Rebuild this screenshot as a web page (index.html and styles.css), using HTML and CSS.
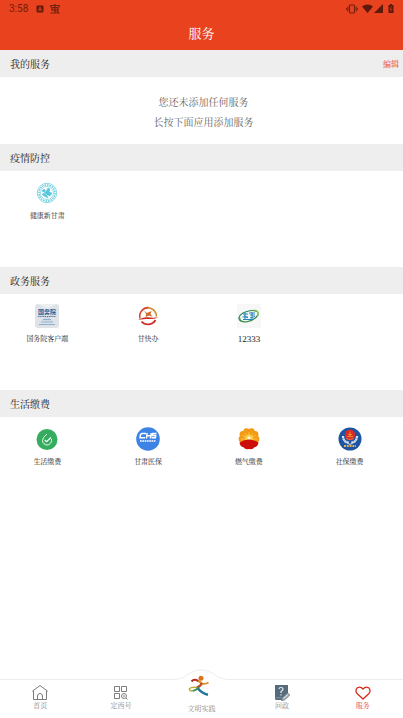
FILE: index.html
```html
<!DOCTYPE html>
<html lang="zh-CN">
<head>
    <meta charset="UTF-8">
    <meta name="viewport" content="width=device-width, initial-scale=1.0">
    <title>服务</title>
    <link rel="stylesheet" href="styles.css">
</head>
<body>
    <header class="header">
        <div class="status-bar">
            <span class="time">3:58</span>
            <svg class="status-app" width="8" height="8" viewBox="0 0 8 8">
                <rect x="0.5" y="0.5" width="7" height="7" rx="1" fill="#641b0d"/>
                <path d="M2.5 6 L4 2 L5.5 6 M3 4.8 H5" fill="none" stroke="#e8421e" stroke-width="0.8"/>
            </svg>
            <svg class="status-bug" width="10" height="10" viewBox="0 0 10 10" fill="none" stroke="#74200f" stroke-width="1.2">
                <path d="M5 0 V9 M0.8 3.2 V1.5 H9.2 V3.2 M2 3.7 H8 V6.2 H2 Z M0.5 9 H7.5 M7 7 L9.3 9.6"/>
            </svg>
            <div class="status-right">
                <svg width="12" height="10" viewBox="0 0 12 10" fill="none" stroke="#74200f">
                    <rect x="3.5" y="1" width="5" height="8" rx="1" stroke-width="1.2"/>
                    <path d="M1.8 2.5 V7.5 M0.4 4 V6 M10.2 2.5 V7.5 M11.6 4 V6"/>
                </svg>
                <svg class="wifi" width="11" height="9" viewBox="0 0 11 9">
                    <path d="M0 2.5 Q5.5 -1.7 11 2.5 L5.5 9 Z" fill="#5d190c"/>
                </svg>
                <svg class="signal" width="9" height="9" viewBox="0 0 9 9">
                    <path d="M0 9 L9 0 V9 Z" fill="#5d190c"/>
                </svg>
                <svg class="battery" width="6" height="9" viewBox="0 0 6 9">
                    <path d="M0.5 1 H2 V0 H4 V1 H5.5 V9 H0.5 Z" fill="#5d190c"/>
                    <path d="M3.5 2.5 L1.8 5.2 H3.8 L2.6 7.5" fill="none" stroke="#e8421e" stroke-width="0.6"/>
                </svg>
            </div>
        </div>
        <h1 class="title">服务</h1>
    </header>

    <main class="content">
        <section>
            <div class="section-bar">
                <h2>我的服务</h2>
                <button type="button" class="edit-button">编辑</button>
            </div>
            <div class="empty">
                <p>您还未添加任何服务</p>
                <p>长按下面应用添加服务</p>
            </div>
        </section>

        <section>
            <div class="section-bar"><h2>疫情防控</h2></div>
            <div class="grid">
                <a href="#" class="item">
                    <svg width="24" height="24" viewBox="0 0 24 24" fill="none" stroke="#55c5d8">
                        <circle cx="12" cy="12" r="9.7" stroke-width="0.7"/>
                        <circle cx="12" cy="12" r="8" stroke-width="1.4" stroke-dasharray="1.5 1"/>
                        <circle cx="12" cy="12" r="6.5" stroke-width="0.6"/>
                        <path d="M7 10 L9 8 L11 10 L13 7 L15 8 L14 11 L17 12 L15 15 L12 14 L13 17 L9 15 L7 13 L10 12 Z" fill="#55c5d8" stroke-width="0.5"/>
                        <path d="M8 11 L14 16 M12 8.5 L10 11" stroke="#fff" stroke-width="0.5"/>
                    </svg>
                    <span>健康新甘肃</span>
                </a>
            </div>
        </section>

        <section>
            <div class="section-bar"><h2>政务服务</h2></div>
            <div class="grid">
                <a href="#" class="item">
                    <svg width="24" height="24" viewBox="0 0 24 24">
                        <rect width="24" height="24" rx="3" fill="#dfe3e7"/>
                        <path d="M3 0 H21 L12 5 Z" fill="#eceef0"/>
                        <text x="12" y="10" class="icon-gov">国务院</text>
                        <path d="M3 12.5 H21" stroke="#51779a" stroke-width="1" stroke-dasharray="1.5 0.7"/>
                        <path d="M8 15.5 H16 M6 18 H18 M4 20.5 H20" stroke="#8fb0d2" stroke-width="1"/>
                        <path d="M9 14.5 L12 13.5 L15 14.5 M7 17 H17" stroke="#b2c9df" stroke-width="0.7" fill="none"/>
                    </svg>
                    <span>国务院客户端</span>
                </a>
                <a href="#" class="item">
                    <svg width="24" height="24" viewBox="0 0 24 24" fill="none">
                        <path d="M4 14.5 A8.6 8.6 0 0 1 13 3.7" stroke="#d8432a" stroke-width="1.6"/>
                        <path d="M12 3.7 A8.6 8.6 0 0 1 20.4 12.5" stroke="#d78a2a" stroke-width="1.6"/>
                        <path d="M5.5 17.5 A8.6 8.6 0 0 0 19.5 16" stroke="#cf3028" stroke-width="1.8"/>
                        <path d="M2 16 Q7 12.5 12 13.3 T22 13.3 Q19 15.5 14 15 T2 16 Z" fill="#cf2c26"/>
                        <path d="M8 6.5 L11 9 L15.5 7 L14.5 10 L16.5 12.7 L13 11.5 L9.5 12.9 L10.2 10 Z" fill="#ce6927"/>
                    </svg>
                    <span>甘快办</span>
                </a>
                <a href="#" class="item">
                    <svg width="24" height="24" viewBox="0 0 24 24">
                        <rect width="24" height="24" fill="#f7f7f7"/>
                        <g fill="none" transform="rotate(-15 12 12)">
                            <path d="M3 15 A9.6 5 0 0 1 20.5 9.5" stroke="#25865b" stroke-width="1"/>
                            <path d="M18 7.7 Q24 10 20 14.3" stroke="#78b947" stroke-width="1.5"/>
                            <path d="M2.5 11 Q1 16 9 17 Q16 17.3 20 14" stroke="#338d4a" stroke-width="1.3"/>
                        </g>
                        <path d="M6 10 H11 M8 8.5 V16 M5.5 13 H11 M12 9 H18 M13 11 H18 M15 8 V15 M6 15.5 H17 M7 11.5 L11 14 M13 14 L18 12.5" stroke="#2584bb" stroke-width="1"/>
                    </svg>
                    <span class="digits">12333</span>
                </a>
            </div>
        </section>

        <section>
            <div class="section-bar"><h2>生活缴费</h2></div>
            <div class="grid">
                <a href="#" class="item">
                    <svg width="24" height="24" viewBox="0 0 24 24" fill="none">
                        <circle cx="12" cy="12.5" r="10.5" fill="#36ad5e"/>
                        <path d="M12 7 Q7.5 10.5 7.5 13.5 A4.5 4.5 0 0 0 16.5 13.5 V12" stroke="#e7f6eb" stroke-width="1"/>
                        <path d="M9.7 13 L11.5 14.7 L16 10.5" stroke="#fff" stroke-width="1.1"/>
                    </svg>
                    <span>生活缴费</span>
                </a>
                <a href="#" class="item">
                    <svg width="24" height="24" viewBox="0 0 24 24">
                        <circle cx="12" cy="12" r="11.8" fill="#3d83e6"/>
                        <path d="M10 6.5 H5.7 L4.5 7.7 L4 10.8 H9 M11.2 6 L10.4 11.5 M15.2 6 L14.4 11.5 M10.8 8.8 H14.8 M20.5 6.5 H16.8 L16.4 8.6 H19.7 L19.3 10.8 H15.7" fill="none" stroke="#fff" stroke-width="1.5"/>
                        <path d="M4 14 H20" stroke="#d3e2fa" stroke-width="1.8" stroke-dasharray="1.7 0.6"/>
                    </svg>
                    <span>甘肃医保</span>
                </a>
                <a href="#" class="item">
                    <svg width="24" height="24" viewBox="0 0 24 24">
                        <g fill="#f39a14">
                            <circle cx="4.8" cy="12" r="3.2"/>
                            <circle cx="5.8" cy="7.2" r="3.2"/>
                            <circle cx="9.5" cy="4.4" r="3.2"/>
                            <circle cx="14.5" cy="4.4" r="3.2"/>
                            <circle cx="18.2" cy="7.2" r="3.2"/>
                            <circle cx="19.2" cy="12" r="3.2"/>
                            <circle cx="12" cy="10" r="7"/>
                        </g>
                        <circle cx="12" cy="11.5" r="4" fill="#ffc52e"/>
                        <path d="M12 12 V5 M12 12 L8 6 M12 12 L16 6 M12 12 L5 8 M12 12 L19 8 M12 12 H4 M12 12 H20" stroke="#ffe575" stroke-width="0.5"/>
                        <circle cx="12" cy="11" r="1.5" fill="#fff"/>
                        <path d="M2.5 15.5 Q12 9.5 21.5 15.5 Q21 19.5 17.5 20.2 Q16 22.7 12 22 Q8 22.7 6.5 20.2 Q3 19.5 2.5 15.5 Z" fill="#cd0d0b"/>
                    </svg>
                    <span>燃气缴费</span>
                </a>
                <a href="#" class="item">
                    <svg width="24" height="24" viewBox="0 0 24 24" fill="none">
                        <circle cx="12" cy="12" r="11.5" fill="#1d55a2"/>
                        <path d="M5 9 Q5 15 11 15.5 M19 9 Q19 15 13 15.5" stroke="#dce2ee" stroke-width="2.2" stroke-dasharray="2 0.5"/>
                        <path d="M6 13 L12 17 L18 13 V15 L12 18 L6 15 Z" fill="#c9d4e7"/>
                        <circle cx="12" cy="7.8" r="5.2" fill="#d92a25"/>
                        <path d="M9 9.5 H15 M10 7.5 H14 M12 4.5 V9" stroke="#f5a32d" stroke-width="0.8"/>
                        <path d="M8 11 Q12 14 16 11" stroke="#df5e45" stroke-width="1.5"/>
                        <path d="M6 19 H18" stroke="#d8b35b" stroke-width="1.8" stroke-dasharray="2 0.8"/>
                    </svg>
                    <span>社保缴费</span>
                </a>
            </div>
        </section>
    </main>

    <nav class="tabbar">
        <a href="#" class="tab">
            <svg width="18" height="18" viewBox="0 0 18 18" fill="none" stroke="#7d7d7d">
                <path d="M1.3 7.3 L9 1.5 L16.7 7.3 M2.5 6.5 V15.5 H15.5 V6.5"/>
                <path d="M6.5 15.5 V12 A2.5 2.5 0 0 1 11.5 12 V15.5"/>
            </svg>
            <span>首页</span>
        </a>
        <a href="#" class="tab">
            <svg width="18" height="18" viewBox="0 0 18 18" fill="none" stroke="#7d7d7d">
                <path d="M2.5 2.5 H7.5 V7.5 H2.5 Z M9.5 2.5 H14.5 V7.5 H9.5 Z M2.5 9.5 H7.5 V14.5 H2.5 Z"/>
                <circle cx="12" cy="12" r="2.5"/>
                <path d="M14 14 L15.5 15.5 M11 12 H13"/>
            </svg>
            <span>定西号</span>
        </a>
        <a href="#" class="tab tab-center">
            <svg class="bump" width="56" height="11" viewBox="0 0 56 11">
                <path d="M0 10.5 C14 10.5 15 1 28 1 S42 10.5 56 10.5 V11 H0 Z" fill="#fff"/>
                <path d="M0 10.5 C14 10.5 15 1 28 1 S42 10.5 56 10.5" fill="none" stroke="#ededed"/>
            </svg>
            <svg class="runner" width="22" height="22" viewBox="0 0 22 22" fill="none">
                <circle cx="13" cy="3.3" r="2.5" fill="#d8761f"/>
                <path d="M9 5.5 Q12 6.5 14 8.5 Q17 9.5 20.5 7.5" stroke="#d88d25" stroke-width="1.9"/>
                <path d="M3.5 6.5 Q6 3.5 10 5.8" stroke="#b62c29" stroke-width="2"/>
                <path d="M13.5 8 Q13 11 8.5 12.8" stroke="#c64827" stroke-width="2.3"/>
                <path d="M8.5 12.5 Q4 11.5 1.5 13.5 Q1 16 4.5 15.8" stroke="#b5af32" stroke-width="1.5"/>
                <path d="M4.5 15.8 Q8.5 15.5 11 12" stroke="#459154" stroke-width="1.8"/>
                <path d="M10 13.5 Q14 18.5 20 19.7" stroke="#1f789a" stroke-width="2.5"/>
            </svg>
            <span>文明实践</span>
        </a>
        <a href="#" class="tab">
            <svg width="18" height="18" viewBox="0 0 18 18">
                <path d="M2 1 H15 V10 L9 16 H3.5 Q2 16 2 14.5 Z" fill="#566b7b"/>
                <path d="M6 5 Q6 3.5 8 3.5 Q10 3.5 10 5.3 Q10 6.5 8 7.5 V9 M8 10.3 V11.5" fill="none" stroke="#e5eaed" stroke-width="1.2"/>
                <path d="M2.5 13.7 H9" stroke="#8e9ba5" stroke-width="0.8"/>
                <path d="M8.5 16.5 L9.5 13.5 L14.5 9 L16.8 11 L11.5 16 Z" fill="#a7b4bd" stroke="#60717d" stroke-width="0.8"/>
                <path d="M10.5 14.5 L15 10.5" stroke="#fff" stroke-width="0.6"/>
            </svg>
            <span>问政</span>
        </a>
        <a href="#" class="tab active">
            <svg width="18" height="18" viewBox="0 0 18 18" fill="none" stroke="#d92c1c">
                <path d="M9 15 L3.3 9.8 C0.5 7 2.3 3.2 5.3 3.2 Q7.5 3.2 9 5 Q10.5 3.2 12.7 3.2 C15.7 3.2 17.5 7 14.7 9.8 Z" stroke-width="1.3"/>
            </svg>
            <span>服务</span>
        </a>
    </nav>
</body>
</html>
```

FILE: styles.css
```css
* {
    box-sizing: border-box;
}

body {
    display: flex;
    flex-direction: column;
    min-height: 100vh;
    margin: 0;
    background-color: #fff;
    color: #1c1c1c;
    font-family: "Liberation Serif", "Noto Serif CJK SC", "Noto Sans CJK SC", serif;
}

h1, h2, p {
    margin: 0;
    font-weight: normal;
}

a {
    color: inherit;
    text-decoration: none;
}

svg {
    display: block;
}

.header {
    background-color: #e8421e;
    color: #fff;
}

.status-bar {
    display: flex;
    align-items: center;
    height: 17px;
    padding: 0 9px;
    color: #74200f;
    font-family: Roboto, sans-serif;
    font-size: 10px;
}

.status-app {
    margin-left: 8px;
}

.status-bug {
    margin-left: 6px;
}

.status-right {
    display: flex;
    align-items: center;
    margin-left: auto;
}

.wifi {
    margin-left: 4px;
}

.signal {
    margin-left: 1px;
}

.battery {
    margin-left: 5px;
}

.title {
    font-size: 13px;
    line-height: 33px;
    text-align: center;
}

.content {
    flex: 1;
}

.section-bar {
    display: flex;
    justify-content: space-between;
    align-items: center;
    height: 27px;
    padding: 0 4px 0 10px;
    background-color: #eee;
}

.section-bar h2 {
    font-size: 10px;
}

.edit-button {
    padding: 0;
    border: none;
    background: none;
    color: #e8421e;
    font-family: inherit;
    font-size: 8px;
    cursor: pointer;
}

.empty {
    padding: 16px 0 11px 4px;
    color: #666;
    font-size: 10px;
    line-height: 20px;
    text-align: center;
}

.grid {
    display: grid;
    grid-template-columns: repeat(4, 1fr);
    min-height: 96px;
}

.item {
    display: flex;
    flex-direction: column;
    align-items: center;
    padding: 10px 6px 0 0;
    font-size: 7px;
    line-height: 22px;
}

.digits {
    font-size: 9px;
}

.icon-gov {
    fill: #1c5c97;
    font-family: "Noto Sans CJK SC", sans-serif;
    font-size: 6px;
    font-weight: bold;
    text-anchor: middle;
}

.tabbar {
    display: flex;
    height: 39px;
    border-top: 1px solid #ededed;
    background-color: #fff;
}

.tab {
    display: flex;
    flex: 1;
    flex-direction: column;
    align-items: center;
    padding-top: 4px;
    color: #8a8a8a;
    font-size: 7px;
    line-height: 9px;
}

.tab.active {
    color: #e8421e;
}

.tab-center {
    position: relative;
    justify-content: flex-end;
    padding: 0 0 4px;
}

/* the middle tab rises above the bar */
.bump {
    position: absolute;
    top: -11px;
    left: 50%;
    margin-left: -28px;
}

.runner {
    position: absolute;
    top: -5px;
    left: 50%;
    margin-left: -13px;
}
```
